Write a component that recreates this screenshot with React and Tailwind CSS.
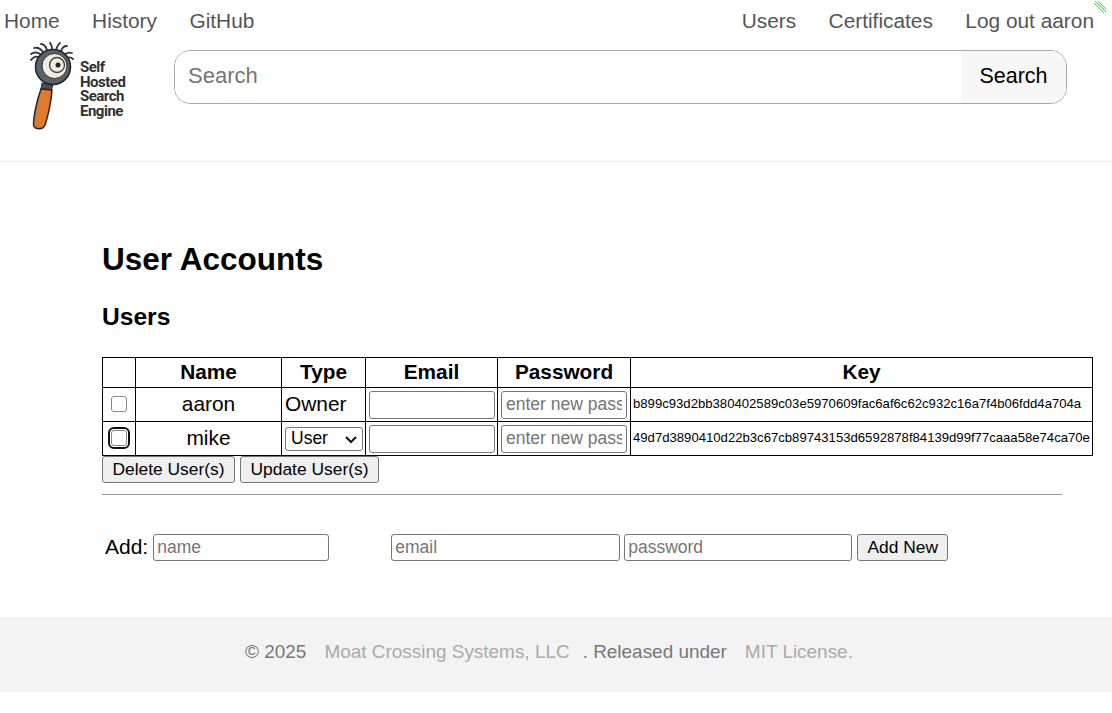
const sans = "font-['Liberation_Sans',Arial,sans-serif]";

const fieldClass =
  "box-border rounded-[3px] border border-[#767676] bg-white text-[17.5px] text-black outline-none placeholder:text-[#757575]";

const buttonClass =
  "box-border rounded-[3px] border border-[#767676] bg-[#efefef] text-[17.4px] leading-none text-black";

const thClass = "border border-black text-center text-[20.8px] font-bold leading-none";
const tdClass = "border border-black p-0 leading-[24px]";

function Logo() {
  return (
    <div className="flex w-[104px] items-start">
      <svg width="50" height="92" viewBox="0 0 50 92" className="shrink-0">
        <g fill="none" stroke="#2f3337" strokeWidth="1.8" strokeLinecap="round">
          <path d="M3 18 C5 15 8 14 11 15" />
          <path d="M3 12 C6 10 9 10 12 12" />
          <path d="M6 6 C10 5 13 7 15 10" />
          <path d="M13 2 C16 2 18 5 19 8" />
          <path d="M22 1 C24 3 24 5 24 7" />
          <path d="M32 1 C30 2 29 5 28 8" />
          <path d="M39 4 C36 4 34 6 33 9" />
          <path d="M44 11 C41 10 38 11 36 13" />
          <path d="M45 17 C43 15 41 15 39 16" />
        </g>
        <path d="M14 41 L25 43 L23 49 L13 47 Z" fill="#4b5055" stroke="#24272a" strokeWidth="1" />
        <path d="M13 47 L24 48 C23 60 20 74 17 83 C15 88 7 88 5.5 83 C5.5 74 9 58 13 47 Z" fill="#dd7a2d" stroke="#2a2522" strokeWidth="1.5" />
        <circle cx="25" cy="25" r="17.5" fill="#5a6367" stroke="#202428" strokeWidth="1.5" />
        <circle cx="26.5" cy="24" r="12.5" fill="#f0ebdd" stroke="#2b2f33" strokeWidth="1" />
        <circle cx="29" cy="23" r="7.5" fill="none" stroke="#3b3f42" strokeWidth="1.3" />
        <circle cx="30" cy="23" r="2.5" fill="#202428" />
      </svg>
      <div className="ml-[2px] mt-[18px] whitespace-nowrap font-['Roboto',sans-serif] text-[15px] font-bold leading-[14.7px] tracking-[-0.5px] text-[#2f3133]">
        <div>Self</div>
        <div>Hosted</div>
        <div>Search</div>
        <div>Engine</div>
      </div>
    </div>
  );
}

function SignalMark() {
  return (
    <svg width="14" height="14" viewBox="0 0 14 14" className="absolute right-[5px] top-[0px]">
      <g stroke="#35e03f" strokeWidth="1" fill="none">
        <path d="M1 3 L11 13" />
        <path d="M2 1 L13 12" />
        <path d="M5 1 L13 9" />
      </g>
    </svg>
  );
}

function UserRow({ name, type, userKey, focused }) {
  return (
    <tr className="h-[34px]">
      <td className={`${tdClass} text-center`}>
        <div className={`flex items-center justify-center ${focused ? "pb-[1px]" : "pb-[2px]"}`}>
          <input
            type="checkbox"
            className={`m-0 h-[16px] w-[16px] appearance-none rounded-[3px] border border-[#888] bg-white ${
              focused ? "outline-[2.5px] outline-offset-[1.5px] outline-[#101010]" : ""
            }`}
          />
        </div>
      </td>
      <td className={`${tdClass} pb-[2px] text-center text-[20.9px]`}>{name}</td>
      <td className={`${tdClass} px-[3px] text-[20.9px] ${type === "Owner" ? "pb-[2px]" : ""}`}>
        {type === "Owner" ? (
          "Owner"
        ) : (
          <div className="relative">
            <select
              defaultValue="User"
              className="box-border block h-[24px] w-[78px] appearance-none rounded-[3px] border border-[#767676] bg-white pb-[2px] pl-[5px] text-[17.5px] leading-[20px] text-black"
            >
              <option>User</option>
              <option>Owner</option>
            </select>
            <svg width="12" height="8" viewBox="0 0 12 8" className="pointer-events-none absolute left-[60px] top-[9px]">
              <path d="M1 1 L6 6 L11 1" fill="none" stroke="#111" strokeWidth="2" />
            </svg>
          </div>
        )}
      </td>
      <td className={`${tdClass} px-[3px]`}>
        <input type="text" className={`${fieldClass} block h-[28px] w-[126px] px-[4px]`} />
      </td>
      <td className={`${tdClass} px-[3px]`}>
        <input
          type="text"
          placeholder="enter new password"
          className={`${fieldClass} block h-[28px] w-[126px] px-[4px]`}
        />
      </td>
      <td className={`${tdClass} whitespace-nowrap px-[2px] pb-[1px] text-[13.13px]`}>{userKey}</td>
    </tr>
  );
}

export default function App() {
  return (
    <div className={`${sans} min-h-[713px] bg-white text-black`}>
      <div className="relative flex h-[42px] items-center justify-between text-[20.85px] text-[#555]">
        <div className="flex gap-[32.5px] pl-[4px]">
          <a>Home</a>
          <a>History</a>
          <a>GitHub</a>
        </div>
        <div className="flex gap-[32.5px] pr-[18px]">
          <a>Users</a>
          <a>Certificates</a>
          <a>Log out aaron</a>
        </div>
        <SignalMark />
      </div>

      <header className="flex h-[120px] items-start border-b border-[#eeeeee] pl-[28px]">
        <Logo />
        <div className="ml-[42px] mt-[8px] flex h-[54px] w-[893px] overflow-hidden rounded-[16px] border border-[#a9a9a9]">
          <input
            type="text"
            placeholder="Search"
            className="min-w-0 flex-1 bg-white px-[13px] pb-[3px] text-[22px] outline-none placeholder:text-[#757575]"
          />
          <button className="w-[105px] bg-[#f7f7f7] pb-[2px] text-[21.5px] text-black">Search</button>
        </div>
      </header>

      <main className="px-[102px]">
        <h1 className="mt-[79px] text-[31.5px] font-bold leading-[37px]">User Accounts</h1>
        <h2 className="mt-[24px] text-[24.6px] font-bold leading-[29px]">Users</h2>

        <table className="mt-[26px] w-[990px] table-fixed border-collapse">
          <colgroup>
            <col className="w-[33px]" />
            <col className="w-[146px]" />
            <col className="w-[84px]" />
            <col className="w-[132px]" />
            <col className="w-[133px]" />
            <col className="w-[462px]" />
          </colgroup>
          <thead>
            <tr className="h-[30px]">
              <th className={thClass}></th>
              <th className={thClass}>Name</th>
              <th className={thClass}>Type</th>
              <th className={thClass}>Email</th>
              <th className={thClass}>Password</th>
              <th className={thClass}>Key</th>
            </tr>
          </thead>
          <tbody>
            <UserRow
              name="aaron"
              type="Owner"
              userKey="b899c93d2bb380402589c03e5970609fac6af6c62c932c16a7f4b06fdd4a704a"
            />
            <UserRow
              name="mike"
              type="User"
              focused
              userKey="49d7d3890410d22b3c67cb89743153d6592878f84139d99f77caaa58e74ca70e"
            />
          </tbody>
        </table>

        <div className="flex gap-[5px]">
          <button className={`${buttonClass} h-[27px] w-[133px]`}>Delete User(s)</button>
          <button className={`${buttonClass} h-[27px] w-[139px]`}>Update User(s)</button>
        </div>

        <hr className="mt-[11px] w-[960px] border-t border-[#999]" />

        <div className="mt-[39px] flex h-[27px] items-center pl-[3px]">
          <span className="pb-[2px] text-[21px]">Add:</span>
          <input type="text" placeholder="name" className={`${fieldClass} ml-[5px] h-[27px] w-[176px] px-[3px]`} />
          <input type="text" placeholder="email" className={`${fieldClass} ml-[62px] h-[27px] w-[229px] px-[3px]`} />
          <input type="text" placeholder="password" className={`${fieldClass} ml-[4px] h-[27px] w-[228px] px-[3px]`} />
          <button className={`${buttonClass} ml-[5px] h-[27px] w-[91px]`}>Add New</button>
        </div>
      </main>

      <footer className="mt-[56px] flex h-[75px] items-center justify-center gap-[18px] bg-[#f3f3f3] pb-[4px] pr-[14px] text-[18.95px] text-[#777]">
        <span>© 2025</span>
        <a className="text-[#aaaaaa]">Moat Crossing Systems, LLC</a>
        <span className="-ml-[5px]">. Released under</span>
        <a className="text-[#aaaaaa]">MIT License.</a>
      </footer>
    </div>
  );
}
